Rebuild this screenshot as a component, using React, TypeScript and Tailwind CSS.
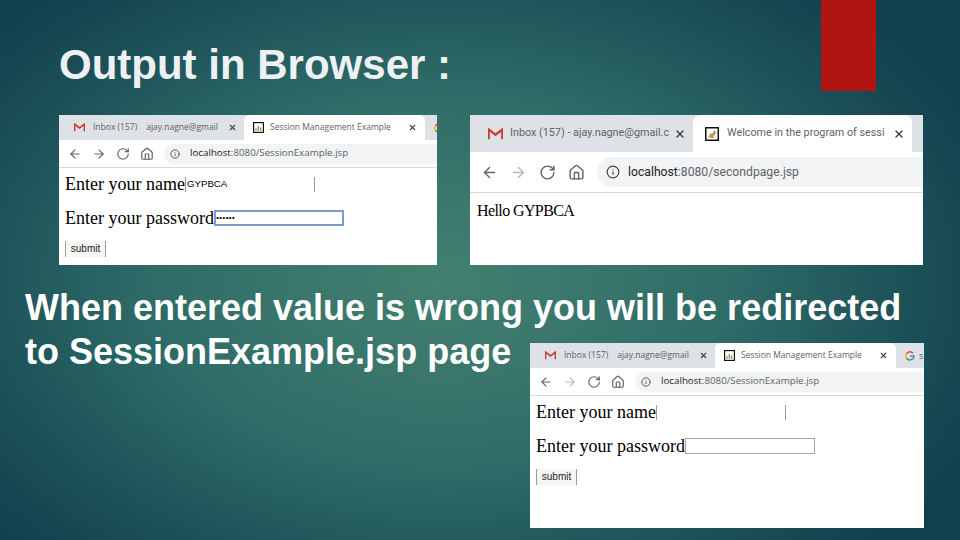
import { ArrowLeft, ArrowRight, RotateCw, Home, Info, X } from "lucide-react";

function Gmail({ size = 12 }: { size?: number }) {
  return (
    <svg width={size} height={size * 0.8} viewBox="0 0 20 16" className="shrink-0">
      <path d="M1 15V2l9 7 9-7v13" fill="none" stroke="#c5403a" strokeWidth="3" />
    </svg>
  );
}

function GoogleLogo() {
  return (
    <svg width={10} height={10} viewBox="0 0 20 20" className="shrink-0">
      <path d="M16 4.5A8 8 0 0 0 3 5.5" fill="none" stroke="#ea4335" strokeWidth="3" />
      <path d="M3 5.5a8 8 0 0 0 0 9" fill="none" stroke="#fbbc05" strokeWidth="3" />
      <path d="M3 14.5a8 8 0 0 0 12.5 1.2" fill="none" stroke="#34a853" strokeWidth="3" />
      <path d="M15.5 15.7A8 8 0 0 0 18 10h-8" fill="none" stroke="#4285f4" strokeWidth="3" />
    </svg>
  );
}

function Favicon({ size = 12, tomcat = false }: { size?: number; tomcat?: boolean }) {
  return (
    <svg width={size} height={size} viewBox="0 0 14 14" className="shrink-0">
      <rect x="0.75" y="0.75" width="12.5" height="12.5" fill="#fff" stroke="#111" strokeWidth="1.5" />
      {tomcat ? (
        <path d="M3 11l2-4 3-1 1-3 2 2-1 3-2 1 1 2H6L5 10z" fill="#b59a4d" />
      ) : (
        <path d="M3 11V8h1.5v3zM6 11V5h1.5v6zM9 11V7h1.5v4z" fill="#8a7a3a" />
      )}
    </svg>
  );
}

function SmallBrowser({ third, dim, children, className }: { third?: boolean; dim?: boolean; children: React.ReactNode; className: string }) {
  return (
    <div className={`bg-white overflow-hidden flex flex-col ${className}`}>
      <div className="flex items-stretch bg-[#dee1e6] shrink-0 h-[25px] pl-[10px] font-['Open_Sans',sans-serif] text-[8.5px] text-[#5f6368]">
        <div className="flex items-center shrink-0 w-[175px] pl-[5px] pr-[7px]">
          <Gmail size={11} />
          <span className="ml-[8px] whitespace-nowrap">Inbox (157)</span>
          <span className="ml-[9px] whitespace-nowrap">ajay.nagne@gmail</span>
          <X size={9} strokeWidth={3} className="text-[#444] shrink-0 ml-auto" />
        </div>
        <div className="flex items-center shrink-0 bg-white w-[181px] gap-[6px] pl-[9px] pr-[8px] rounded-t-md">
          <Favicon size={11} />
          <span className="flex-1 whitespace-nowrap">Session Management Example</span>
          <X size={9} strokeWidth={3} className="text-[#444] shrink-0" />
        </div>
        <div className="flex items-center shrink-0 pl-[9px] gap-[4px] text-[9px]">
          <GoogleLogo />
          {third && <span>s</span>}
        </div>
      </div>
      <div className="flex items-center shrink-0 border-b border-[#d8dadd] h-[28px] pl-[9px] gap-[10px]">
        <ArrowLeft size={14} className="text-[#5f6368] shrink-0" />
        <ArrowRight size={14} className={`${dim ? "text-[#b5b7ba]" : "text-[#5f6368]"} shrink-0`} />
        <RotateCw size={14} className="text-[#5f6368] shrink-0" />
        <Home size={14} className="text-[#5f6368] shrink-0" />
        <div className="flex-1 flex items-center bg-[#f1f3f4] rounded-l-full font-['Open_Sans',sans-serif] text-[#5f6368] h-[20px] pl-[6px] gap-[10px] text-[9.75px]">
          <Info size={10} className="text-[#444] shrink-0" />
          <span className="whitespace-nowrap">
            <span className="text-[#222]">localhost</span>:8080/SessionExample.jsp
          </span>
        </div>
      </div>
      <div className="flex-1 min-h-0 font-['Liberation_Serif',serif] text-black">{children}</div>
    </div>
  );
}

function LargeBrowser({ className }: { className: string }) {
  return (
    <div className={`bg-white overflow-hidden flex flex-col ${className}`}>
      <div className="flex items-stretch bg-[#dee1e6] shrink-0 h-[37px] pl-[5px] font-['Roboto',sans-serif] text-[10.8px] text-[#5f6368]">
        <div className="flex items-center shrink-0 w-[218px] pl-[13px] pr-[7px]">
          <Gmail size={15} />
          <span className="ml-[7px] whitespace-nowrap">Inbox (157) - ajay.nagne@gmail.c</span>
          <X size={12} strokeWidth={3} className="text-[#444] shrink-0 ml-auto" />
        </div>
        <div className="flex items-center shrink-0 bg-white w-[219px] gap-[8px] pl-[12px] pr-[9px] rounded-t-lg">
          <Favicon size={14} tomcat />
          <span className="flex-1 whitespace-nowrap">Welcome in the program of sessi</span>
          <X size={12} strokeWidth={3} className="text-[#444] shrink-0" />
        </div>
      </div>
      <div className="flex items-center shrink-0 border-b border-[#d8dadd] h-[41px] pl-[11px] gap-[12px]">
        <ArrowLeft size={17} className="text-[#5f6368] shrink-0" />
        <ArrowRight size={17} className="text-[#b5b7ba] shrink-0" />
        <RotateCw size={17} className="text-[#5f6368] shrink-0" />
        <Home size={17} className="text-[#5f6368] shrink-0" />
        <div className="flex-1 flex items-center bg-[#f1f3f4] rounded-l-full font-['Roboto',sans-serif] text-[#5f6368] h-[30px] pl-[9px] gap-[8px] text-[12.2px]">
          <Info size={14} className="text-[#444] shrink-0" />
          <span className="whitespace-nowrap">
            <span className="text-[#222]">localhost</span>:8080/secondpage.jsp
          </span>
        </div>
      </div>
      <div className="flex-1 min-h-0 font-['Liberation_Serif',serif] text-black pl-[7px] pt-[8px] text-[16px] leading-[20px] tracking-[-0.6px]">
        Hello GYPBCA
      </div>
    </div>
  );
}

function LoginForm({ name, focused }: { name?: string; focused?: boolean }) {
  return (
    <div className="pl-[6px] pt-[6px] text-[18px] leading-[20px]">
      <div className="flex items-center h-[20px]">
        <span>Enter your name</span>
        <div className="w-[130px] h-[15px] border-x border-[#999] flex items-center pl-[1px] text-[9.7px] font-['Liberation_Sans',sans-serif]">
          {name}
        </div>
      </div>
      <div className="flex items-center h-[20px] mt-[14px]">
        <span>Enter your password</span>
        <div
          className={`w-[130px] h-[16px] flex items-center text-[9px] leading-none ${
            focused ? "border-2 border-[#7d9dc5]" : "border border-[#a5a5a5]"
          }`}
        >
          {focused ? "••••••" : ""}
        </div>
      </div>
      <div className="mt-[13px] w-[41px] h-[16px] border-x border-[#999] bg-[#f6f6f6] flex items-center justify-center text-[10px] text-[#222] font-['Liberation_Sans',sans-serif]">
        submit
      </div>
    </div>
  );
}

export default function App() {
  return (
    <div className="relative w-[960px] h-[540px] overflow-hidden bg-[radial-gradient(ellipse_62%_72%_at_46%_52%,#44806f_0%,#2f6c68_48%,#1c5158_78%,#123f4c_100%)] font-['Liberation_Sans',sans-serif]">
      <div className="absolute left-[821px] top-0 w-[55px] h-[91px] bg-[#b01513]" />

      <div className="flex flex-col pt-[41px]">
        <h1 className="pl-[59px] text-[42px] leading-[48px] font-bold text-[#eef1f3]">Output in Browser :</h1>

        <div className="flex pl-[59px] gap-[33px] mt-[26px]">
          <SmallBrowser className="w-[378px] h-[150px]">
            <LoginForm name="GYPBCA" focused />
          </SmallBrowser>
          <LargeBrowser className="w-[453px] h-[150px]" />
        </div>

        <p className="pl-[25px] mt-[21px] text-[36px] leading-[44px] font-bold text-white whitespace-nowrap">
          When entered value is wrong you will be redirected
          <br />
          to SessionExample.jsp page
        </p>
      </div>

      <SmallBrowser className="absolute left-[530px] top-[343px] w-[394px] h-[185px]" third dim>
        <LoginForm />
      </SmallBrowser>
    </div>
  );
}
